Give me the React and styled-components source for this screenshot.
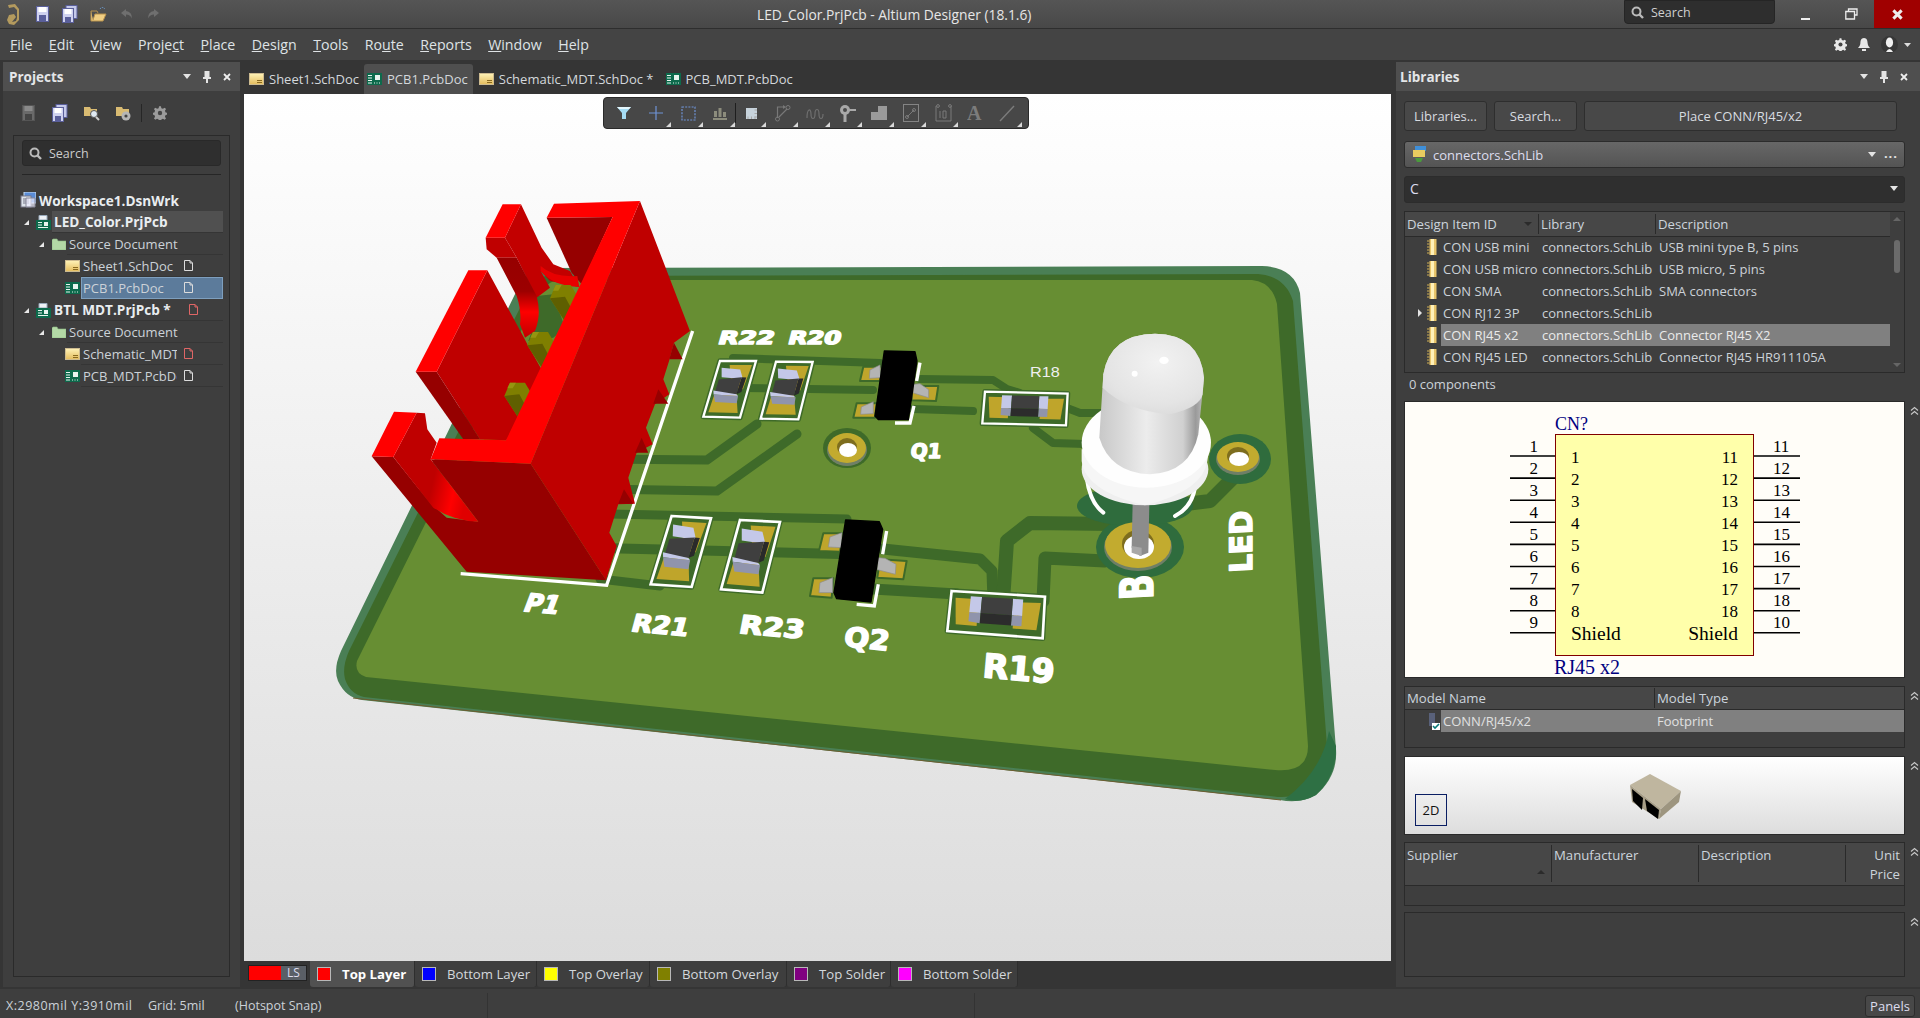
import React from 'react';
import styled, { createGlobalStyle } from 'styled-components';

const Global = createGlobalStyle`
  html, body { margin: 0; padding: 0; background: #3e3e3e; }
  * { box-sizing: border-box; }
  body { font-family: "Open Sans", "Noto Sans", sans-serif; font-size: 13px; color: #d4d8dc; }
`;

const Root = styled.div`width:1920px;height:1018px;display:flex;flex-direction:column;overflow:hidden;background:#353535;`;
const TitleBar = styled.div`height:29px;flex:none;display:grid;grid-template-columns:757px 1fr auto;align-items:center;background:linear-gradient(#555,#484848);border-bottom:1px solid #2e2e2e;`;
const QuickIcons = styled.div`display:flex;align-items:center;gap:12.5px;padding-left:7px;height:28px;`;
const LogoWrap = styled.span`display:flex;margin-right:3.5px;`;
const Title = styled.div`font-size:13.8px;color:#e6e6e6;`;
const TitleRight = styled.div`display:flex;align-items:flex-start;height:28px;`;
const GlobalSearch = styled.div`width:151px;height:24px;background:#2e2e2e;border:1px solid #252525;border-radius:0 0 4px 4px;display:flex;align-items:center;gap:7px;padding-left:6px;color:#d0d0d0;font-size:12.5px;margin-right:7px;`;
const WinBtn = styled.div`width:46px;height:28px;display:flex;align-items:center;justify-content:center;background:${p=>p.$close?'#a00000':'transparent'};`;
const MenuBar = styled.div`height:31px;flex:none;display:flex;align-items:center;background:#444;padding:0 8px 0 10px;`;
const MenuItem = styled.div`font-size:14.2px;color:#dfe3e6;margin-right:16.4px;white-space:nowrap;`;
const MenuRight = styled.div`margin-left:auto;display:flex;align-items:center;gap:11px;padding-right:1px;`;
const Main = styled.div`flex:1;display:flex;min-height:0;background:#353535;`;

const SidePanel = styled.div`width:${p=>p.$w}px;margin:2px 0 3px ${p=>p.$ml}px;flex:none;display:flex;flex-direction:column;background:#3e3e3e;`;
const PanelHead = styled.div`height:29px;flex:none;background:#4f4f4f;display:flex;align-items:center;padding:0 ${p=>p.$pr}px 0 ${p=>p.$pl}px;font-weight:700;font-size:13.5px;color:#e4e6e8;`;
const HeadTools = styled.div`margin-left:auto;display:flex;align-items:center;gap:${p=>p.$g}px;`;
const ProjTools = styled.div`height:44px;flex:none;display:flex;align-items:center;padding-left:9px;`;
const ToolSlot = styled.span`width:${p=>p.$w||32}px;display:flex;align-items:center;justify-content:center;`;
const ToolDiv = styled.span`width:1px;height:18px;background:#262626;margin:0 6px 0 1px;`;
const TreeBox = styled.div`flex:1;margin:0 10px 10px 10px;border:1px solid #2a2a2a;display:flex;flex-direction:column;`;
const SearchBox = styled.div`height:26px;flex:none;margin:4px 8px 0 8px;background:#2f2f2f;border:1px solid #292929;border-radius:3px;display:flex;align-items:center;gap:7px;padding-left:6px;font-size:12.5px;color:#ccc;`;
const SearchRule = styled.div`height:1px;flex:none;margin:8px 8px 14px 8px;background:#262626;`;
const TreeRow = styled.div`height:22px;display:flex;align-items:center;padding-left:${p=>p.$pad}px;padding-right:6px;`;
const Arrow = styled.span`width:0;height:0;flex:none;margin-right:${p=>p.$mr}px;border-left:5px solid transparent;border-bottom:5px solid #e8e8e8;`;
const TreeLabel = styled.div`flex:1;height:22px;min-width:0;display:flex;align-items:center;margin-left:${p=>p.$ml||3}px;padding-left:2px;
  font-weight:${p=>p.$bold?700:400};font-size:${p=>p.$bold?'13.6px':'13px'};color:${p=>p.$bold?'#e9edf0':'#ccd2d8'};
  background:${p=>p.$sel?'#5c7b9b':p.$hl?'#505050':'transparent'};
  outline:${p=>p.$sel?'1px solid #7e9fbe':'none'};outline-offset:-1px;
  border-bottom:${p=>p.$line?'1px solid #353535':'none'};`;
const TreeText = styled.span`white-space:nowrap;overflow:hidden;width:${p=>p.$w?p.$w+'px':'auto'};flex:none;`;
const TreeDoc = styled.span`display:flex;margin-left:${p=>p.$ml||7}px;`;

const DocArea = styled.div`width:1152px;flex:none;display:flex;flex-direction:column;margin-right:4px;`;
const TabBar = styled.div`height:34px;flex:none;display:flex;align-items:flex-end;background:#353535;padding-left:9px;`;
const DocTab = styled.div`height:30px;display:flex;align-items:center;gap:5px;padding:0 ${p=>p.$pr||5}px 0 ${p=>p.$pl||0}px;margin-left:${p=>p.$ml||0}px;font-size:13px;color:#d4d8dc;white-space:nowrap;
  background:${p=>p.$on?'#4f4f4f':'transparent'};border-radius:${p=>p.$on?'3px 3px 0 0':'0'};`;
const Canvas = styled.div`height:867px;flex:none;margin-left:4px;width:1147px;position:relative;background:linear-gradient(#ffffff,#dcdcdc);overflow:hidden;`;
const FloatBar = styled.div`position:absolute;left:359px;top:3px;width:426px;height:32px;background:#474747;border:1px solid #2a2a2a;border-radius:4px;display:flex;align-items:center;padding-left:4px;`;
const FloatBtn = styled.div`width:32px;height:30px;flex:none;display:flex;align-items:center;justify-content:center;position:relative;
  &::after{content:"";display:${p=>p.$noCaret?'none':'block'};position:absolute;right:1px;bottom:1px;border-left:5px solid transparent;border-bottom:5px solid #d8d8d8;}`;
const FloatSep = styled.span`width:1px;height:20px;background:#1e1e1e;flex:none;margin:0 -1px;`;
const Board = styled.svg`display:block;position:absolute;inset:0;`;
const Silk = styled.text`font-family:"DejaVu Sans",sans-serif;font-weight:700;fill:#fff;stroke:#fff;stroke-width:1.5px;stroke-linejoin:round;`;
const ThinSilk = styled.text`font-family:"Liberation Sans",sans-serif;fill:#f0f0f0;`;

const LayerBar = styled.div`height:26px;flex:none;display:flex;align-items:stretch;padding-left:8px;background:#353535;`;
const CurrentLayer = styled.div`width:59px;height:16px;margin:4px 3px 0 0;display:flex;border:1px solid #222;`;
const CurrentSwatch = styled.span`width:32px;background:#f00;`;
const CurrentLS = styled.span`flex:1;background:#5a5f66;font-size:12px;line-height:14px;text-align:center;color:#dde;`;
const LayerTab = styled.div`width:${p=>p.$w}px;display:flex;align-items:center;padding-left:7px;gap:11px;font-size:13.2px;white-space:nowrap;color:${p=>p.$on?'#fff':'#d4d8dc'};font-weight:${p=>p.$on?700:400};
  background:${p=>p.$on?'#515151':'#3e3e3e'};border-right:1px solid #2e2e2e;border-radius:0 0 3px 3px;`;
const LayerSwatch = styled.span`width:14px;height:14px;flex:none;background:${p=>p.$c};border:1px solid #b8b8b8;`;

const RightBody = styled.div`flex:1;display:flex;flex-direction:column;padding-left:8px;`;
const BtnRow = styled.div`display:flex;gap:7px;margin-top:10px;height:30px;flex:none;width:493px;`;
const PanelBtn = styled.div`width:${p=>p.$w?p.$w+'px':'auto'};flex:${p=>p.$w?'none':'1'};background:#484848;border:1px solid #2e2e2e;border-radius:3px;display:flex;align-items:center;justify-content:center;font-size:13px;color:#d8dce0;`;
const Combo = styled.div`width:501px;height:${p=>p.$h}px;margin-top:${p=>p.$mt}px;flex:none;border:1px solid #2c2c2c;border-radius:3px;display:flex;align-items:center;gap:5px;padding:0 6px ${p=>p.$dark?2:0}px ${p=>p.$dark?5:7}px;font-size:${p=>p.$dark?14:13}px;line-height:${p=>p.$dark?22:18}px;color:#dde;
  background:${p=>p.$dark?'#2f2f2f':'linear-gradient(#676767,#545454)'};`;
const ComboEnd = styled.div`margin-left:auto;display:flex;align-items:center;gap:8px;`;
const Caret = styled.span`width:0;height:0;border-left:4px solid transparent;border-right:4px solid transparent;border-top:5px solid #e4e4e4;`;
const Dots = styled.span`font-weight:700;letter-spacing:1px;line-height:8px;height:12px;color:#e4e4e4;`;
const Section = styled.div`display:flex;flex:none;margin-top:${p=>p.$mt||0}px;`;
const Pane = styled.div`width:501px;height:${p=>p.$h}px;flex:none;border:1px solid #2a2a2a;overflow:hidden;background:${p=>p.$bg||'#3e3e3e'};position:relative;display:flex;flex-direction:column;`;
const Collapse = styled.div`width:15px;padding:1px 0 0 5px;`;
const TableWrap = styled.div`display:flex;flex:1;min-height:0;`;
const TableMain = styled.div`width:485px;flex:none;`;
const ColHead = styled.div`height:${p=>p.$h||25}px;margin-bottom:${p=>p.$mb||0}px;display:flex;align-items:${p=>p.$top?'flex-start':'center'};background:#474747;border-bottom:1px solid #2a2a2a;font-size:13.2px;color:#ccd4dc;`;
const ColCell = styled.div`width:${p=>p.$w?p.$w+'px':'auto'};flex:${p=>p.$w?'none':'1'};padding:${p=>p.$top?'1px':'0'} 4px 0 2px;height:${p=>p.$top?'37px':'20px'};line-height:${p=>p.$top?'19px':'20px'};margin-top:${p=>p.$top?'2px':'0'};
  border-right:${p=>p.$last?'none':'1px solid #2a2a2a'};display:flex;align-items:${p=>p.$top?'flex-start':'center'};position:relative;justify-content:${p=>p.$end?'flex-end':'flex-start'};text-align:${p=>p.$end?'right':'left'};`;
const SortUp = styled.span`position:absolute;right:6px;bottom:${p=>p.$b}px;border-left:4px solid transparent;border-right:4px solid transparent;${p=>p.$up?'border-bottom:4px solid #2b2b2b;':'border-top:4px solid #2b2b2b;'}`;
const LibRow = styled.div`height:22px;display:flex;align-items:center;font-size:13px;color:#ccd2d8;`;
const LibExp = styled.span`width:22px;flex:none;display:flex;justify-content:flex-end;padding-right:5px;`;
const ExpTri = styled.span`border-top:4px solid transparent;border-bottom:4px solid transparent;border-left:4px solid #e4e4e4;`;
const LibIcon = styled.span`width:14px;flex:none;display:flex;`;
const LibName = styled.div`width:98px;flex:none;height:22px;line-height:22px;padding-left:2px;white-space:nowrap;overflow:hidden;background:${p=>p.$sel?'#808080':'none'};color:${p=>p.$sel?'#eaeaea':'inherit'};`;
const LibCell = styled.div`width:${p=>p.$w?p.$w+'px':'auto'};flex:${p=>p.$w?'none':'1'};height:22px;line-height:22px;padding-left:3px;white-space:nowrap;overflow:hidden;background:${p=>p.$sel?'#808080':'none'};color:${p=>p.$sel?'#eaeaea':'inherit'};`;
const ScrollCol = styled.div`width:14px;flex:none;position:relative;display:flex;flex-direction:column;align-items:center;padding-top:5px;`;
const ArrowUp = styled.span`border-left:4px solid transparent;border-right:4px solid transparent;border-bottom:4px solid #666;`;
const ArrowDn = styled.span`position:absolute;bottom:5px;border-left:4px solid transparent;border-right:4px solid transparent;border-top:4px solid #666;`;
const Thumb = styled.span`width:6px;height:33px;background:#6b6b6b;border-radius:3px;margin-top:19px;`;
const CountLine = styled.div`height:28px;flex:none;line-height:22px;padding-left:5px;font-size:13px;color:#ccd2d8;`;
const ModelRow = styled.div`height:22px;flex:none;display:flex;align-items:center;font-size:13px;color:#e0e0e0;padding-left:24px;`;
const ModelIcon = styled.span`width:12px;height:20px;flex:none;display:block;margin-top:4px;position:relative;`;
const ModelName = styled.div`flex:1;height:22px;background:#808080;display:flex;align-items:center;padding-left:2px;`;
const ModelCell = styled.span`width:${p=>p.$w?p.$w+'px':'auto'};`;
const Btn2D = styled.div`position:absolute;left:10px;top:37px;width:32px;height:32px;border:1px solid #0a1e63;font-size:13px;color:#111;display:flex;align-items:center;justify-content:center;`;
const Mini3D = styled.svg`position:absolute;left:0;top:0;`;
const StatusBar = styled.div`height:29px;flex:none;display:flex;align-items:center;background:#3e3e3e;font-size:12.5px;color:#ccd2d8;padding:4px 0 0 6px;margin-top:-1px;white-space:nowrap;`;
const StatusCell = styled.span`width:${p=>p.$w}px;flex:none;letter-spacing:${p=>p.$ls||0}px;`;
const StatusDiv = styled.span`width:1px;height:25px;background:#333;flex:none;margin-left:${p=>p.$ml}px;`;
const PanelsBtn = styled.div`margin-left:auto;margin-right:5px;width:50px;height:22px;background:#484848;border:1px solid #2c2c2c;border-radius:3px;display:flex;align-items:center;justify-content:center;font-size:13px;color:#dde;`;

/* ---------- icons ---------- */
const Sch = ({s=15}) => (<svg width={s} height={s*0.8} viewBox="0 0 15 12"><defs><linearGradient id="sg" x1="0" y1="0" x2="0" y2="1"><stop offset="0" stopColor="#fff3b8"/><stop offset="1" stopColor="#e4bc5c"/></linearGradient></defs><rect x=".5" y=".5" width="14" height="11" fill="url(#sg)" stroke="#cdbb90"/><path d="M8 7.5h5M8 9.5h5" stroke="#8a6a20"/></svg>);
const Pcb = ({s=15}) => (<svg width={s} height={s*0.8} viewBox="0 0 15 12"><rect width="15" height="12" fill="#0d6a4c"/><rect x="8" y="2" width="5" height="5" fill="#e8f4ee"/><path d="M1 2.5h4M1 5h4M1 7.5h4M1 10h4M7 10h1M9.5 10h1M12 10h1" stroke="#e8f4ee"/></svg>);
const Folder = () => (<svg width="14" height="12" viewBox="0 0 14 12"><path d="M0 2V12H14V3H6L5 1H1Z" fill="#b3d9a6" stroke="#8fbc85" strokeWidth=".6"/></svg>);
const PageDoc = ({c='#dcdcdc'}) => (<svg width="9" height="11" viewBox="0 0 9 11"><path d="M.5.5H6L8.5 3V10.5H.5Z" fill="none" stroke={c}/><path d="M6 .5V3H8.5" fill="none" stroke={c}/></svg>);
const Proj = () => (<svg width="15" height="15" viewBox="0 0 15 15"><path d="M3 .5H11V5H3Z" fill="#eef2f6" stroke="#9ab"/><rect y="5" width="15" height="10" fill="#0d6a4c"/><rect x="8" y="7" width="4" height="4" fill="#e8f4ee"/><path d="M2 7.5h4M2 10h4M2 12.5h10" stroke="#e8f4ee"/></svg>);
const Work = () => (<svg width="16" height="16" viewBox="0 0 16 16"><rect x="4" y="0" width="12" height="11" fill="#5a8cd6" stroke="#cde"/><rect x="1" y="4" width="10" height="11" fill="#dde3ea" stroke="#778"/><path d="M3 7h6M3 9h6M3 11h6" stroke="#778"/><path d="M6 6h9v9H6Z" fill="#eef" fillOpacity=".7" stroke="#889"/></svg>);
const Mag = ({c='#bbb'}) => (<svg width="13" height="13" viewBox="0 0 13 13"><circle cx="5.5" cy="5.5" r="4" fill="none" stroke={c} strokeWidth="2"/><path d="M8.5 8.5L12 12" stroke={c} strokeWidth="2.4"/></svg>);
const Gear = ({c='#e8e8e8',s=13}) => (<svg width={s} height={s} viewBox="0 0 14 14"><path d="M6 0h2l.4 2 1.6.7 1.8-1.1 1.4 1.4-1.1 1.8.7 1.6 2 .4v2l-2 .4-.7 1.6 1.1 1.8-1.4 1.4-1.8-1.1-1.6.7-.4 2H6l-.4-2-1.6-.7-1.8 1.1L.8 12.6l1.1-1.8-.7-1.6-2-.4v-2l2-.4.7-1.6L.8 3 2.2 1.6 4 2.7l1.6-.7Z" fill={c} transform="translate(.2 .2) scale(.97)"/><circle cx="7" cy="7" r="2.2" fill="#444"/></svg>);
const Floppy = ({c='#cfd2ef',b='#5a5f9a',d=false}) => (<svg width="13" height="16" viewBox="0 0 13 16"><rect x=".5" y=".5" width="12" height="15" fill={d?'#6a6a6a':c} stroke={d?'#555':b}/><rect x="2.5" y="1" width="8" height="5" fill={d?'#8a8a8a':'#fff'}/><rect x="3" y="9" width="7" height="6" fill={d?'#444':'#5a5f9a'}/></svg>);
const Floppies = () => (<svg width="16" height="18" viewBox="0 0 16 18"><rect x="4" y=".5" width="11" height="13" fill="#c5c9ea" stroke="#5a5f9a"/><rect x=".5" y="3.5" width="11" height="14" fill="#cfd2ef" stroke="#5a5f9a"/><rect x="2.5" y="4" width="7" height="5" fill="#fff"/><rect x="3" y="12" width="6" height="5" fill="#5a5f9a"/></svg>);
const OpenF = () => (<svg width="17" height="16" viewBox="0 0 17 16"><path d="M1 5V15H13L16 8H5L3 14" fill="#f1cf83" stroke="#b8924c"/><path d="M1 5H7L8 7" fill="none" stroke="#b8924c"/><path d="M10 3Q12 0 15 3" fill="none" stroke="#6da0d8" strokeDasharray="1.5 1"/></svg>);
const UndoIco = ({flip}) => (<svg width="14" height="12" viewBox="0 0 14 12" style={flip?{transform:'scaleX(-1)'}:undefined}><path d="M6 1L1 5l5 4V6.5q4 0 6 4q0-7-6-7.5Z" fill="#6f6f6f"/></svg>);
const Logo = () => (<svg width="13" height="21" viewBox="0 0 13 21"><path d="M1 1 8 0l4 5v11l-5 5-5-1-2-4 2-5 5-1 2 3-4 5 4-1 1-3V6L7 3 2 4Z" fill="#b39a5e"/></svg>);
const Bell = () => (<svg width="12" height="13" viewBox="0 0 12 13"><path d="M6 0c3 0 3.6 3 3.6 5S11 9 12 10H0c1-1 2.4-3 2.4-5S3 0 6 0Z" fill="#e8e8e8"/><rect x="4" y="11" width="4" height="2" fill="#e8e8e8"/></svg>);
const UserI = () => (<svg width="17" height="17" viewBox="0 0 17 17"><circle cx="8.5" cy="8.5" r="8.5" fill="#373737"/><ellipse cx="8.5" cy="6.5" rx="3.6" ry="5" fill="#f0f0f0"/><path d="M5 16q3.5-6 7 0Z" fill="#f0f0f0"/></svg>);
const Pin = ({s=10}) => (<svg width={s} height={s+2} viewBox="0 0 10 12"><path d="M2.5 0h5v6h1.5v2H6v4H4V8H1V6h1.5Z" fill="#e4e4e4"/></svg>);
const CloseX = ({s=8,w=1.8,c='#eee'}) => (<svg width={s} height={s} viewBox="0 0 8 8"><path d="M1 1l6 6M7 1L1 7" stroke={c} strokeWidth={w}/></svg>);
const Chip = () => (<svg width="12" height="16" viewBox="0 0 12 16"><rect x="2.5" width="7" height="16" fill="#e8c46a"/><rect x="4" width="3" height="16" fill="#fff0b8"/><path d="M0 2h2.5M0 5h2.5M0 8h2.5M0 11h2.5M0 14h2.5" stroke="#cfae52"/></svg>);
const Lib = () => (<svg width="16" height="17" viewBox="0 0 16 17"><rect x="3" y="0" width="11" height="5" fill="#3f8fd8"/><path d="M1 4H13V11H1Z" fill="#e8cc60"/><path d="M3 12H11L9 16H5Z" fill="#4a9a3c"/></svg>);
const Chev = () => (<svg width="9" height="10" viewBox="0 0 9 10"><path d="M1 4.5l3.5-3 3.5 3M1 8.5l3.5-3 3.5 3" fill="none" stroke="#c8c8c8" strokeWidth="1.1"/></svg>);
const F = { filter:(<svg width="14" height="14" viewBox="0 0 14 14"><path d="M0 1H14L9 7V13H5V7Z" fill="#a5dcf4"/><path d="M0 1H14L12 3H2Z" fill="#e4f6fc"/></svg>),
 cross:(<svg width="16" height="16" viewBox="0 0 16 16"><path d="M8 1V15M1 8H15" stroke="#6f93d6" strokeWidth="1.2"/></svg>),
 rect:(<svg width="15" height="15" viewBox="0 0 15 15"><rect x="1" y="1" width="13" height="13" fill="none" stroke="#6f93d6" strokeWidth="1.2" strokeDasharray="2 1.2"/></svg>),
 bars:(<svg width="14" height="14" viewBox="0 0 14 14"><path d="M1 5H4V11H1ZM5.5 2H8.5V11H5.5ZM10 6H13V11H10Z" fill="#8c8c7c"/><rect y="12" width="14" height="2" fill="#8c8c7c"/></svg>),
 chip:(<svg width="17" height="17" viewBox="0 0 17 17"><rect x="3" y="3" width="11" height="11" fill="#c7d3dc"/><path d="M5 0v17M8.5 0v17M12 0v17M0 5h17M0 8.5h17M0 12h17" stroke="#a7a7a7" strokeDasharray="2.5 11.5" strokeDashoffset="2.5"/></svg>),
 route:(<svg width="16" height="18" viewBox="0 0 16 18"><path d="M2.5 14V3H8M4 13L12 5" fill="none" stroke="#787878" strokeWidth="1.2"/><circle cx="2.5" cy="15" r="2" fill="none" stroke="#787878"/><circle cx="13" cy="3.5" r="2" fill="none" stroke="#787878"/><path d="M8 1l3 2-3 2Z" fill="#787878"/></svg>),
 wave:(<svg width="18" height="14" viewBox="0 0 18 14"><path d="M1 12C1 2 5 2 5 8s4 6 4 0 4-6 4 0 4 6 4 0" fill="none" stroke="#6f6f6f" strokeWidth="1.2"/></svg>),
 via:(<svg width="17" height="18" viewBox="0 0 17 18"><circle cx="6" cy="6" r="5" fill="#a9a9a9"/><circle cx="6" cy="6" r="2" fill="#4a4a4a"/><rect x="4.5" y="10" width="3" height="8" fill="#a9a9a9"/><rect x="10" y="5" width="7" height="2" fill="#a9a9a9"/></svg>),
 poly:(<svg width="16" height="14" viewBox="0 0 16 14"><path d="M0 6H7V0H16V14H0Z" fill="#9a9a9a"/></svg>),
 box:(<svg width="16" height="18" viewBox="0 0 16 18"><rect x=".5" y=".5" width="15" height="17" fill="none" stroke="#848484"/><path d="M4 13L11 6" stroke="#7a7a7a"/><circle cx="4" cy="13" r="1.5" fill="none" stroke="#7a7a7a"/><circle cx="11" cy="6" r="1.5" fill="none" stroke="#7a7a7a"/></svg>),
 ten:(<svg width="17" height="18" viewBox="0 0 17 18"><path d="M1 2V17H16V2" fill="none" stroke="#7a7a7a"/><circle cx="3" cy="2" r="1.4" fill="none" stroke="#7a7a7a"/><circle cx="15" cy="2" r="1.4" fill="none" stroke="#7a7a7a"/><path d="M5 7V14M8 7h3v7H8Z" fill="none" stroke="#7a7a7a"/></svg>),
 a:(<svg width="16" height="18" viewBox="0 0 16 18"><text x="0" y="16" fontFamily="Liberation Serif, serif" fontSize="20" fontWeight="700" fill="#7c7c7c">A</text></svg>),
 line:(<svg width="16" height="17" viewBox="0 0 16 17"><path d="M1 16L15 1" stroke="#7c7c7c" strokeWidth="1.4"/></svg>) };

/* ---------- schematic symbol ---------- */
const leftPins=[1,2,3,4,5,6,7,8,9], rightPins=[11,12,13,14,15,16,17,18,10];
const inLeft=['1','2','3','4','5','6','7','8','Shield'], inRight=['11','12','13','14','15','16','17','18','Shield'];
const SchFont = '"Liberation Serif", serif';
const Symbol = () => (
  <svg width="499" height="275" viewBox="1405 402 499 275">
    <rect x="1555.5" y="434.5" width="198" height="221" fill="#ffffaa" stroke="#800000" strokeWidth="1"/>
    <text x="1555" y="430" fontFamily={SchFont} fontSize="18" fill="#000080">CN?</text>
    <text x="1554" y="674" fontFamily={SchFont} fontSize="20" fill="#000080">RJ45 x2</text>
    {leftPins.map((n,i)=>{const y=456+i*22.1;const fs=i===8?19.5:17;return(<g key={n}>
      <path d={`M1510 ${y}H1555M1754 ${y}H1800`} stroke="#000" strokeWidth="1.6"/>
      <text x="1538" y={y-4.5} textAnchor="end" fontFamily={SchFont} fontSize="17">{n}</text>
      <text x="1773" y={y-4.5} fontFamily={SchFont} fontSize="17">{rightPins[i]}</text>
      <text x="1571" y={y+6.5+(i===8?1:0)} fontFamily={SchFont} fontSize={fs}>{inLeft[i]}</text>
      <text x="1738" y={y+6.5+(i===8?1:0)} textAnchor="end" fontFamily={SchFont} fontSize={fs}>{inRight[i]}</text>
    </g>);})}
  </svg>
);

/* ---------- PCB drawing ---------- */
const DK='#3e6a29', PAD='#bfa52b', BD='#3f3f3f', CAP='#c4c8e8', CAPD='#9094ac';
const pts=a=>a.map(p=>p.join(',')).join(' ');
const uvOf=q=>(u,v)=>{const top=[q[0][0]+(q[1][0]-q[0][0])*u,q[0][1]+(q[1][1]-q[0][1])*u],bot=[q[3][0]+(q[2][0]-q[3][0])*u,q[3][1]+(q[2][1]-q[3][1])*u];return[top[0]+(bot[0]-top[0])*v,top[1]+(bot[1]-top[1])*v];};
const VRes=({q,sw=7})=>{const f=uvOf(q);return(<g>
  <polygon points={pts(q)} fill={DK} stroke={DK} strokeWidth="16" strokeLinejoin="round"/>
  <polygon points={pts(q)} fill={DK} stroke="#fff" strokeWidth={sw}/>
  <polygon points={pts([f(.3,.07),f(.92,.07),f(.86,.5),f(.55,.5)])} fill={PAD}/>
  <polygon points={pts([f(.12,.62),f(.72,.58),f(.9,.92),f(.1,.92)])} fill={PAD}/>
  <polygon points={pts([f(.1,.12),f(.63,.15),f(.78,.32),f(.18,.29)])} fill={CAP}/>
  <polygon points={pts([f(.73,.29),f(.86,.29),f(.84,.55),f(.72,.59)])} fill="#2a2a2a"/>
  <polygon points={pts([f(.12,.33),f(.73,.29),f(.72,.59),f(.12,.56)])} fill={BD}/>
  <polygon points={pts([f(.06,.53),f(.72,.59),f(.78,.62),f(.1,.6)])} fill={CAP}/>
  <polygon points={pts([f(.1,.6),f(.78,.62),f(.8,.75),f(.2,.735)])} fill={CAPD}/>
</g>);};
const HRes=({q,sw=7})=>{const f=uvOf(q);return(<g>
  <polygon points={pts(q)} fill={DK} stroke={DK} strokeWidth="16" strokeLinejoin="round"/>
  <polygon points={pts(q)} fill={DK} stroke="#fff" strokeWidth={sw}/>
  <polygon points={pts([f(.05,.16),f(.3,.16),f(.3,.82),f(.08,.82)])} fill={PAD}/>
  <polygon points={pts([f(.68,.18),f(.96,.16),f(.93,.82),f(.68,.82)])} fill={PAD}/>
  <polygon points={pts([f(.21,.1),f(.33,.1),f(.33,.5),f(.21,.5)])} fill={CAP}/>
  <polygon points={pts([f(.21,.5),f(.33,.5),f(.33,.75),f(.21,.72)])} fill={CAPD}/>
  <polygon points={pts([f(.66,.1),f(.77,.1),f(.77,.5),f(.66,.5)])} fill={CAP}/>
  <polygon points={pts([f(.66,.5),f(.77,.5),f(.77,.75),f(.66,.75)])} fill={CAPD}/>
  <polygon points={pts([f(.33,.1),f(.66,.1),f(.66,.5),f(.33,.5)])} fill={BD}/>
  <polygon points={pts([f(.33,.5),f(.66,.5),f(.66,.75),f(.33,.75)])} fill="#2c2c2c"/>
</g>);};
const Sot=({body,silk,pads,pins})=>(<g>
  {pads.map((p,i)=><polygon key={i} points={p} fill={PAD} stroke={DK} strokeWidth="6" strokeLinejoin="round"/>)}
  {silk.map((s,i)=><path key={i} d={s} fill="none" stroke="#fff" strokeWidth="10"/>)}
  {pins.map((p,i)=><polygon key={i} points={p} fill="#b4b4b4" stroke="#8d8d8d" strokeWidth="2"/>)}
  <polygon points={body} fill="#000" stroke="#000" strokeWidth="4" strokeLinejoin="round"/>
</g>);
const Tr=({d,w=8})=><path d={d} fill="none" stroke={DK} strokeWidth={w} strokeLinejoin="round" strokeLinecap="round"/>;
const Pad3D=({cx,cy,rx,ry,h,hr})=>(<g>
  <ellipse cx={cx} cy={cy+2} rx={rx+1} ry={ry+1} fill="#6f7f66"/>
  <ellipse cx={cx} cy={cy} rx={rx} ry={ry} fill="#c2ab2f"/>
  <ellipse cx={cx} cy={cy-1} rx={hr} ry={h} fill="#7d6d1e"/>
  <ellipse cx={cx+1} cy={cy+2} rx={hr-1} ry={h-2} fill="#fff"/>
</g>);
const ConnPin=({dx=0,dy=0})=>(<g transform={`translate(${dx} ${dy})`}>
  <polygon points="553,645 570,605 615,605 642,650 608,730" fill="#7f7f00"/>
  <polygon points="553,645 598,640 625,690 608,730" fill="#5f5f00"/>
  <polygon points="570,605 588,605 578,622 562,622" fill="#959510"/>
</g>);

const PcbView=()=>(
  <Board width="1147" height="867" viewBox="244 93 1147 867">
    <defs>
      <linearGradient id="wingG" x1="0" y1="0" x2="0" y2="1"><stop offset="0" stopColor="#960000"/><stop offset=".42" stopColor="#9c0000"/><stop offset=".68" stopColor="#ff0000"/><stop offset="1" stopColor="#c00000"/></linearGradient>
      <linearGradient id="tabG" x1="0" y1="0" x2="1" y2=".3"><stop offset="0" stopColor="#bf0000"/><stop offset=".6" stopColor="#bf0000"/><stop offset=".85" stopColor="#ff0000"/><stop offset="1" stopColor="#e00000"/></linearGradient>
      <linearGradient id="ledBody" x1="0" y1="0" x2="1" y2="0"><stop offset="0" stopColor="#c8c8c8"/><stop offset=".45" stopColor="#ececec"/><stop offset=".8" stopColor="#d0d0d0"/><stop offset=".92" stopColor="#9a9a9a"/><stop offset="1" stopColor="#bcbcbc"/></linearGradient>
      <radialGradient id="ledDome" cx=".55" cy=".35" r=".75"><stop offset="0" stopColor="#f2f2f2"/><stop offset=".7" stopColor="#e4e4e4"/><stop offset="1" stopColor="#d8d8d8"/></radialGradient>
    </defs>
    <path d="M540 267L1262 265Q1294 266 1300 292L1336 748Q1338 775 1316 794Q1300 803 1280 799L362 699Q346 697 338 680Q333 668 341 650L518 287Q528 270 540 267Z" fill="#4a7f55"/>
    <path d="M546 275L1258 273Q1285 275 1293 300L1327 745Q1328 768 1312 786Q1298 797 1278 796L364 696Q350 693 345 678Q342 666 349 650L526 295Q532 278 546 275Z" fill={DK}/>
    <path d="M556 279L1252 279Q1272 281 1277 303L1308 745Q1308 772 1275 769L366 676Q354 672 357 660L536 300Q542 284 556 279Z" fill="#678e33"/>
    <path d="M353 697L1281 799" stroke="#6d5d30" strokeWidth="1" fill="none"/>
    <path d="M1336 745Q1337 775 1316 794Q1300 803 1285 798Q1322 770 1329 730Z" fill="#2e7044"/>
    {/* traces */}
    <Tr d="M733 357L880 362"/><Tr d="M743 387L873 389"/>
    <Tr d="M920 378L993 379L1007 388L1020 392" w={8}/>
    <Tr d="M913 408L973 410"/><Tr d="M1067 407L1080 412L1105 412"/>
    <Tr d="M1033 427L1053 442L1085 443"/>
    <Tr d="M757 423L707 459L600 458" w={9}/><Tr d="M797 433L717 490L600 488" w={9}/>
    <Tr d="M610 513L847 518" w={9}/>
    <Tr d="M600 547L840 553" w={10}/><Tr d="M600 578L660 585" w={9}/>
    <Tr d="M883 548L980 558L992 570L993 600" w={11}/>
    <Tr d="M873 588L957 593" w={11}/>
    <Tr d="M1003 600L1007 540L1030 522L1115 523" w={14}/>
    <Tr d="M1043 600L1045 557L1105 560" w={13}/>
    <Tr d="M1186 503L1210 500L1238 472" w={14}/>
    {/* through holes */}
    <ellipse cx="847" cy="447" rx="24" ry="20" fill={DK}/>
    <ellipse cx="1240" cy="458" rx="31" ry="25" fill="#2f6c3d"/>
    <ellipse cx="1140" cy="546" rx="44" ry="31" fill="#2f6c3d"/>
    <ellipse cx="1135" cy="505" rx="58" ry="20" fill="#2f6c3d"/>
    <Pad3D cx={847} cy={447} rx={19} ry={15} h={9} hr={10}/>
    <Pad3D cx={1238} cy={456} rx={21} ry={15} h={9} hr={11}/>
    <Pad3D cx={1138} cy={544} rx={33} ry={23} h={14} hr={16}/>
    {/* SMD parts, coordinates of the 3x detail view */}
    <g transform="translate(640 300) scale(.3333)">
      <VRes q={[[240,180],[348,180],[300,350],[190,347]]}/>
      <VRes q={[[408,182],[518,183],[475,355],[362,353]]}/>
      <VRes q={[[95,645],[213,652],[155,858],[32,850]]} sw={8}/>
      <VRes q={[[300,657],[420,663],[367,875],[243,865]]} sw={8}/>
      <HRes q={[[1035,272],[1283,278],[1278,373],[1027,367]]}/>
      <HRes q={[[935,870],[1215,887],[1208,1012],[922,990]]} sw={8}/>
      <Sot body="733,150 825,152 831,180 805,356 715,356 705,345"
        silk={["M840 185L830 240","M822 315L810 366L765 366"]}
        pads={["660,240 670,197 725,197 720,240","640,350 650,307 710,307 705,350","815,255 895,255 888,300 815,298"]}
        pins={["688,232 690,207 720,192 722,230","662,340 664,318 700,302 700,338","820,250 840,248 866,266 866,290 820,276"]}/>
      <Sot body="617,657 718,662 728,685 693,903 590,893 582,875"
        silk={["M740 690L728 760","M715 850L703 915L650 910"]}
        pads={["550,697 610,697 600,752 537,750","520,832 580,832 575,890 510,885","720,775 800,780 790,835 712,830"]}
        pins={["565,738 570,708 606,695 604,740","537,875 540,845 578,830 578,875","715,770 735,772 768,790 766,820 712,806"]}/>
    </g>
    {/* silkscreen labels */}
    <Silk fontSize="18" transform="translate(717 343) skewX(-16) scale(1.44 1)">R22</Silk>
    <Silk fontSize="18" transform="translate(787 343) skewX(-14) scale(1.36 1)">R20</Silk>
    <Silk fontSize="20" transform="translate(910 457) skewX(-6) scale(1 1)">Q1</Silk>
    <ThinSilk fontSize="14.5" transform="translate(1030 376) scale(1.12 1)">R18</ThinSilk>
    <Silk fontSize="23" transform="translate(630 630) rotate(5) skewX(-10) scale(1.15 1.05)">R21</Silk>
    <Silk fontSize="24" transform="translate(738 632) rotate(5) skewX(-6) scale(1.26 1.05)">R23</Silk>
    <Silk fontSize="26" transform="translate(843 645) rotate(6) skewX(-3) scale(1.13 1.05)">Q2</Silk>
    <Silk fontSize="30" transform="translate(982 676) rotate(5) scale(1.11 1.1)">R19</Silk>
    <Silk fontSize="24" transform="translate(522 610) rotate(5) skewX(-16) scale(1.02 1.05)">P1</Silk>
    <Silk fontSize="46" transform="translate(1153 598) rotate(-90) skewX(3) scale(.72 1)">B</Silk>
    <Silk fontSize="31" transform="translate(1252 571) rotate(-90) skewX(3) scale(.93 1)">LED</Silk>
    {/* LED */}
    <g transform="translate(1060 320) scale(.3333)">
      <path d="M80 470Q90 545 130 575M405 500Q395 560 345 585" fill="none" stroke="#fff" strokeWidth="12" strokeLinecap="round"/>
      <polygon points="218,545 268,552 265,695 240,705 215,680" fill="#8c8c8c"/>
      <polygon points="215,675 245,680 245,705 215,695" fill="#a8a8a8"/>
      <ellipse cx="255" cy="445" rx="190" ry="108" fill="#efefef"/>
      <path d="M65 385V420Q75 510 255 553Q430 510 442 420L452 355Z" fill="#f6f6f6"/>
      <ellipse cx="259" cy="365" rx="194" ry="135" fill="#fefefe"/>
      <path d="M118 350L130 160Q150 40 285 38Q420 40 432 170L415 340Q390 455 270 460Q150 455 118 350Z" fill="url(#ledBody)"/>
      <path d="M130 160Q150 40 285 38Q420 40 432 170L428 220Q420 260 330 280Q200 270 128 200Z" fill="url(#ledDome)"/>
      <ellipse cx="312" cy="118" rx="14" ry="11" fill="#fff"/>
      <ellipse cx="224" cy="158" rx="9" ry="9" fill="#fff"/>
    </g>
    {/* connector, coordinates of the 3x detail view */}
    <g transform="translate(320 180) scale(.3333)">
      <path d="M1118 450L860 1213L422 1178" fill="none" stroke="#fff" strokeWidth="10"/>
      <polygon points="650,345 700,340 735,440 700,470 625,480 655,400" fill={DK}/>
      <polygon points="680,110 878,108 785,310 755,275" fill="#960000"/>
      <polygon points="497,170 555,170 590,230 530,230 500,205" fill="#bf0000"/>
      <polygon points="555,170 603,70 665,200 700,250 750,270 778,318 690,300 662,270 690,320 650,350 590,230" fill="#c20000"/>
      <path d="M662 255Q700 290 772 285L778 318Q700 315 662 270Z" fill="#e80000"/>
      <polygon points="548,70 603,70 555,170 497,170" fill="#ff0000"/>
      <path d="M530 230L590 230L650 345Q665 400 645 450L615 470L600 430Q605 390 590 345Z" fill="url(#wingG)"/>
      <ConnPin dx={137} dy={-293}/>
      <polygon points="490,778 500,765 545,765 555,778" fill="#7f7f00"/>
      <polygon points="502,268 612,470 622,490 672,578 608,730 558,778 480,775 350,572" fill="#bf0000"/>
      <ConnPin dx={69} dy={-152}/>
      <ConnPin/>
      <polygon points="287,572 350,572 480,775 430,775" fill="#960000"/>
      <polygon points="445,268 502,268 350,572 287,572" fill="#ff0000"/>
      <polygon points="155,826 220,828 330,965 380,1010 475,1022 332,835 632,848 858,1198 440,1172" fill="#960000"/>
      <path d="M290 695L315 697L322 745L350 785L332 835L475 1022Q400 1020 340 980L220 828Z" fill="url(#tabG)"/>
      <polygon points="222,692 290,695 220,828 155,826" fill="#ff0000"/>
      <polygon points="960,60 1110,450 1062,485 1048,538 1030,595 1048,640 1005,670 978,740 998,790 950,815 925,890 945,968 895,970 868,1055 890,1095 858,1198 632,848" fill="#bf0000"/>
      <polygon points="1062,485 1088,535 1048,535" fill="#960000"/>
      <polygon points="1015,625 1045,668 1000,668" fill="#960000"/>
      <polygon points="965,770 985,815 945,815" fill="#960000"/>
      <polygon points="912,925 940,968 895,968" fill="#960000"/>
      <polygon points="702,68 960,60 632,848 332,835 358,772 558,778 878,108 680,110" fill="#ff0000"/>
    </g>
  </Board>
);

const tree=[
 {k:'w',t:'Workspace1.DsnWrk'},
 {k:'p',t:'LED_Color.PrjPcb',hl:true},
 {k:'f',t:'Source Document'},
 {k:'s',t:'Sheet1.SchDoc',i:Sch},
 {k:'s',t:'PCB1.PcbDoc',i:Pcb,sel:true},
 {k:'p',t:'BTL MDT.PrjPcb *',red:true},
 {k:'f',t:'Source Document'},
 {k:'s',t:'Schematic_MDT.SchDoc',i:Sch,red:true},
 {k:'s',t:'PCB_MDT.PcbDoc',i:Pcb},
];
const libs=[
 ['CON USB mini','USB mini type B, 5 pins'],['CON USB micro','USB micro, 5 pins'],['CON SMA','SMA connectors'],
 ['CON RJ12 3P','',true],['CON RJ45 x2','Connector RJ45 X2',false,true],['CON RJ45 LED','Connector RJ45 HR911105A'],
];
const layers=[['Top Layer','#ff0000',105,true],['Bottom Layer','#0000ff',122],['Top Overlay','#ffff00',113],['Bottom Overlay','#808000',137],['Top Solder','#800080',104],['Bottom Solder','#ff00ff',127]];
const menu=[['','F','ile'],['','E','dit'],['','V','iew'],['Proje','c','t'],['','P','lace'],['','D','esign'],['','T','ools'],['Ro','u','te'],['','R','eports'],['','W','indow'],['','H','elp']];

export default function App(){
  return (<Root><Global/>
    <TitleBar>
      <QuickIcons><LogoWrap><Logo/></LogoWrap><Floppy/><Floppies/><OpenF/><UndoIco/><UndoIco flip/></QuickIcons>
      <Title>LED_Color.PrjPcb - Altium Designer (18.1.6)</Title>
      <TitleRight>
        <GlobalSearch><Mag/>Search</GlobalSearch>
        <WinBtn><svg width="9" height="12" viewBox="0 0 9 12"><rect y="10" width="9" height="2" fill="#eee"/></svg></WinBtn>
        <WinBtn><svg width="13" height="12" viewBox="0 0 13 12"><path d="M3.5 3V1H12V7H9.5M.8 3.5H9.5V11H.8Z" fill="none" stroke="#eee" strokeWidth="1.3"/></svg></WinBtn>
        <WinBtn $close><CloseX s={11} w={2.2}/></WinBtn>
      </TitleRight>
    </TitleBar>
    <MenuBar>
      {menu.map(([a,b,c])=><MenuItem key={a+b+c}>{a}<u>{b}</u>{c}</MenuItem>)}
      <MenuRight><Gear/><Bell/><UserI/><svg width="7" height="4" viewBox="0 0 7 4" style={{marginLeft:-5}}><path d="M0 0H7L3.5 4Z" fill="#ddd"/></svg></MenuRight>
    </MenuBar>
    <Main>
      <SidePanel $w={237} $ml={3}>
        <PanelHead $pl={6} $pr={9}>Projects<HeadTools $g={11}><Caret/><Pin/><CloseX/></HeadTools></PanelHead>
        <ProjTools>
          <ToolSlot><Floppy d/></ToolSlot><ToolSlot><Floppies/></ToolSlot>
          <ToolSlot><svg width="16" height="16" viewBox="0 0 16 16"><path d="M0 2H6L7 4H13V11H0Z" fill="#d9bb72"/><circle cx="10" cy="9" r="3.5" fill="#dfe9f2" stroke="#555"/><path d="M12 12l3 3" stroke="#ccc" strokeWidth="2"/></svg></ToolSlot>
          <ToolSlot><svg width="16" height="17" viewBox="0 0 16 17"><path d="M0 2H6L7 4H13V11H0Z" fill="#d9bb72"/><circle cx="10" cy="11" r="4.5" fill="#b5b5b5"/><circle cx="10" cy="11" r="1.6" fill="#444"/></svg></ToolSlot>
          <ToolDiv/><ToolSlot $w={24}><Gear c="#9b9b9b" s={14}/></ToolSlot>
        </ProjTools>
        <TreeBox>
          <SearchBox><Mag/>Search</SearchBox>
          <SearchRule/>
          {tree.map((r,i)=>{
            if(r.k==='w')return <TreeRow key={i} $pad={6}><Work/><TreeLabel $ml={1} $bold>{r.t}</TreeLabel></TreeRow>;
            if(r.k==='p')return <TreeRow key={i} $pad={10}><Arrow $mr={7}/><Proj/><TreeLabel $ml={1} $bold $hl={r.hl} $line><TreeText $w={128}>{r.t}</TreeText>{r.red&&<TreeDoc $ml={0}><PageDoc c="#e06666"/></TreeDoc>}</TreeLabel></TreeRow>;
            if(r.k==='f')return <TreeRow key={i} $pad={25}><Arrow $mr={8}/><Folder/><TreeLabel $ml={1} $line>{r.t}</TreeLabel></TreeRow>;
            const I=r.i;
            return <TreeRow key={i} $pad={51}><I/><TreeLabel $ml={1} $sel={r.sel} $line><TreeText $w={94}>{r.t}</TreeText><TreeDoc><PageDoc c={r.red?'#e06666':'#dcdcdc'}/></TreeDoc></TreeLabel></TreeRow>;
          })}
        </TreeBox>
      </SidePanel>
      <DocArea>
        <TabBar>
          <DocTab><Sch/>Sheet1.SchDoc</DocTab>
          <DocTab $on $pl={3}><Pcb/>PCB1.PcbDoc</DocTab>
          <DocTab $pl={6}><Sch/>Schematic_MDT.SchDoc *</DocTab>
          <DocTab $pl={7}><Pcb/>PCB_MDT.PcbDoc</DocTab>
        </TabBar>
        <Canvas>
          <PcbView/>
          <FloatBar>
            <FloatBtn $noCaret>{F.filter}</FloatBtn><FloatBtn>{F.cross}</FloatBtn><FloatBtn>{F.rect}</FloatBtn><FloatBtn>{F.bars}</FloatBtn><FloatSep/>
            <FloatBtn>{F.chip}</FloatBtn><FloatBtn>{F.route}</FloatBtn><FloatBtn>{F.wave}</FloatBtn><FloatBtn>{F.via}</FloatBtn><FloatBtn>{F.poly}</FloatBtn><FloatBtn>{F.box}</FloatBtn><FloatBtn>{F.ten}</FloatBtn><FloatBtn $noCaret>{F.a}</FloatBtn><FloatBtn>{F.line}</FloatBtn>
          </FloatBar>
        </Canvas>
        <LayerBar>
          <CurrentLayer><CurrentSwatch/><CurrentLS>LS</CurrentLS></CurrentLayer>
          {layers.map(([t,c,w,on])=><LayerTab key={t} $w={w} $on={on}><LayerSwatch $c={c}/>{t}</LayerTab>)}
        </LayerBar>
      </DocArea>
      <SidePanel $w={524} $ml={0}>
        <PanelHead $pl={4} $pr={12}>Libraries<HeadTools $g={11}><Caret/><Pin/><CloseX/></HeadTools></PanelHead>
        <RightBody>
          <BtnRow><PanelBtn $w={83}>Libraries...</PanelBtn><PanelBtn $w={83}>Search...</PanelBtn><PanelBtn>Place CONN/RJ45/x2</PanelBtn></BtnRow>
          <Combo $h={27} $mt={10}><Lib/>connectors.SchLib<ComboEnd><Caret/><Dots>...</Dots></ComboEnd></Combo>
          <Combo $h={27} $mt={8} $dark>C<ComboEnd><Caret/></ComboEnd></Combo>
          <Section $mt={8}><Pane $h={162}>
            <TableWrap>
              <TableMain>
                <ColHead $mb={-1}><ColCell $w={134}>Design Item ID<SortUp $b={8}/></ColCell><ColCell $w={117}>Library</ColCell><ColCell $last>Description</ColCell></ColHead>
                {libs.map(([n,d,exp,sel])=>(
                  <LibRow key={n}>
                    <LibExp>{exp&&<ExpTri/>}</LibExp><LibIcon><Chip/></LibIcon>
                    <LibName $sel={sel}>{n}</LibName><LibCell $w={117} $sel={sel}>connectors.SchLib</LibCell><LibCell $sel={sel}>{d}</LibCell>
                  </LibRow>))}
              </TableMain>
              <ScrollCol><ArrowUp/><Thumb/><ArrowDn/></ScrollCol>
            </TableWrap>
          </Pane></Section>
          <CountLine>0 components</CountLine>
          <Section><Pane $h={277} $bg="#fffdf8"><Symbol/></Pane><Collapse><Chev/></Collapse></Section>
          <Section $mt={8}><Pane $h={62}>
            <ColHead $h={23}><ColCell $w={250}>Model Name</ColCell><ColCell $last>Model Type</ColCell></ColHead>
            <ModelRow><ModelIcon><svg width="12" height="18" viewBox="0 0 12 18"><rect x="0" y="0" width="6" height="13" fill="#59617a"/><rect x="3" y="10" width="8" height="7" fill="#fff"/><path d="M4 13l2 2 4-4" stroke="#0a7a7a" strokeWidth="1.6" fill="none"/></svg></ModelIcon><ModelName><ModelCell $w={214}>CONN/RJ45/x2</ModelCell><ModelCell>Footprint</ModelCell></ModelName></ModelRow>
          </Pane><Collapse><Chev/></Collapse></Section>
          <Section $mt={8}><Pane $h={79} $bg="linear-gradient(#ffffff,#dddddd)">
            <Mini3D width="499" height="78" viewBox="1405 757 499 78">
              <polygon points="1630,785 1650,774 1681,791 1661,809" fill="#bfb69f"/>
              <polygon points="1630,785 1661,809 1659,819 1632,802" fill="#a89f88"/>
              <polygon points="1632,789 1643,798 1642,810 1633,801" fill="#000"/>
              <polygon points="1645,799 1659,810 1658,819 1647,811" fill="#000"/>
              <polygon points="1661,809 1681,791 1679,802 1659,819" fill="#9d957f"/>
            </Mini3D>
            <Btn2D>2D</Btn2D>
          </Pane><Collapse><Chev/></Collapse></Section>
          <Section $mt={7}><Pane $h={64}>
            <ColHead $h={43} $top>
              <ColCell $w={147} $top>Supplier<SortUp $up $b={8}/></ColCell><ColCell $w={147} $top>Manufacturer</ColCell><ColCell $w={147} $top>Description</ColCell><ColCell $top $end $last>Unit<br/>Price</ColCell>
            </ColHead>
          </Pane><Collapse><Chev/></Collapse></Section>
          <Section $mt={6}><Pane $h={65}/><Collapse><Chev/></Collapse></Section>
        </RightBody>
      </SidePanel>
    </Main>
    <StatusBar>
      <StatusCell $w={142} $ls={.5}>X:2980mil Y:3910mil</StatusCell><StatusCell $w={87}>Grid: 5mil</StatusCell><StatusCell $w={252}>(Hotspot Snap)</StatusCell>
      <StatusDiv $ml={0}/><StatusDiv $ml={486}/>
      <PanelsBtn>Panels</PanelsBtn>
    </StatusBar>
  </Root>);
}
